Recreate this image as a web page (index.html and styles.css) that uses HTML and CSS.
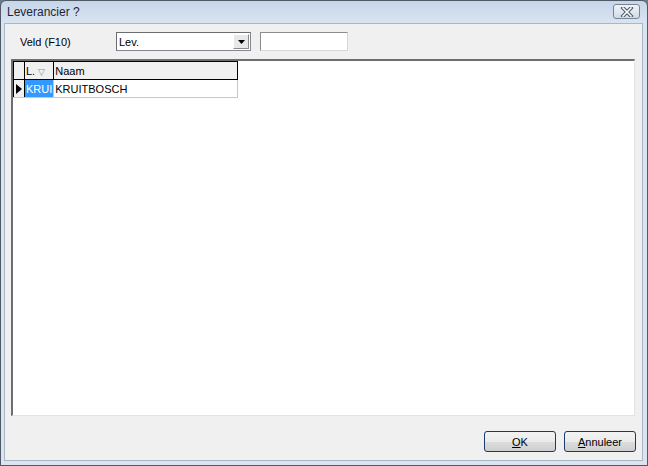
FILE: index.html
```html
<!DOCTYPE html>
<html lang="nl">
<head>
  <meta charset="UTF-8">
  <title>Leverancier ?</title>
  <link rel="stylesheet" href="styles.css">
</head>
<body>
  <div class="venster">
    <div class="titelbalk">
      <span class="titel">Leverancier ?</span>
      <span class="sluiten">
        <svg width="14" height="10" viewBox="0 0 14 10">
          <path d="M3 1 L11 9 M11 1 L3 9" stroke="#4a5568" stroke-width="3.6" stroke-linecap="square"/>
          <path d="M3 1 L11 9 M11 1 L3 9" stroke="#fff" stroke-width="1.6" stroke-linecap="square"/>
        </svg>
      </span>
    </div>
    <div class="inhoud">
      <div class="zoekregel">
        <span class="label">Veld (F10)</span>
        <div class="combo">
          <span class="combo-tekst">Lev.</span>
          <span class="combo-knop">
            <svg width="7" height="4" viewBox="0 0 7 4"><path d="M0 0 H7 L3.5 4 Z" fill="#000"/></svg>
          </span>
        </div>
        <div class="invoer"></div>
      </div>

      <div class="raster">
        <table class="tabel">
          <thead>
            <tr>
              <th class="ind"></th>
              <th class="kol-lev">L. <span class="sorteer">&#9661;</span></th>
              <th class="kol-naam">Naam</th>
            </tr>
          </thead>
          <tbody>
            <tr>
              <td class="ind"><svg width="6" height="10" viewBox="0 0 6 10"><path d="M0 0 L6 5 L0 10 Z" fill="#000"/></svg></td>
              <td class="geselecteerd">KRUI</td>
              <td>KRUITBOSCH</td>
            </tr>
          </tbody>
        </table>
      </div>

      <div class="knoppen">
        <button class="knop"><u>O</u>K</button>
        <button class="knop"><u>A</u>nnuleer</button>
      </div>
    </div>
  </div>
</body>
</html>
```

FILE: styles.css
```css
html, body {
  margin: 0;
  padding: 0;
}
body {
  width: 648px;
  height: 466px;
  overflow: hidden;
  font-family: Tahoma, "Liberation Sans", sans-serif;
  font-size: 11px;
  background-color: #6d7a88;
}
.venster {
  box-sizing: border-box;
  width: 648px;
  height: 466px;
  display: flex;
  flex-direction: column;
  border: 1px solid #4f5a66;
  border-radius: 6px 6px 0 0;
  background: linear-gradient(#c6d6ea, #d9e4f1 22px, #dbe5f1);
  padding: 0 4px 4px 3px;
}
.titelbalk {
  height: 22px;
  display: flex;
  align-items: center;
  justify-content: space-between;
}
.titel {
  font-family: "Segoe UI", "Liberation Sans", sans-serif;
  font-size: 12px;
  color: #1e2633;
  padding-left: 3px;
  margin-top: -1px;
}
.sluiten {
  width: 25px;
  height: 13px;
  margin-right: 3px;
  margin-top: -1px;
  border: 1px solid #7b8494;
  border-radius: 3px;
  background: linear-gradient(#f0f4f9, #d0dae6);
  display: flex;
  align-items: center;
  justify-content: center;
}
.inhoud {
  flex: 1;
  display: flex;
  flex-direction: column;
  background-color: #f0f0f0;
  border: 1px solid #a9b6c4;
  padding: 0 7px 0 6px;
}
.zoekregel {
  display: flex;
  align-items: center;
  height: 35px;
}
.label {
  width: 96px;
  padding-left: 9px;
  color: #000;
}
.combo {
  box-sizing: border-box;
  width: 135px;
  height: 19px;
  display: flex;
  align-items: center;
  border: 1px solid #828790;
  border-top-color: #6d6d6d;
  border-left-color: #6d6d6d;
  background: #fff;
}
.combo-tekst {
  flex: 1;
  padding-left: 2px;
}
.combo-knop {
  box-sizing: border-box;
  width: 16px;
  height: 15px;
  margin-right: 1px;
  background: #e8e8e8;
  border: 1px solid #fff;
  border-right-color: #8a8a8a;
  border-bottom-color: #8a8a8a;
  display: flex;
  align-items: center;
  justify-content: center;
}
.invoer {
  box-sizing: border-box;
  width: 88px;
  height: 19px;
  margin-left: 9px;
  background: #fff;
  border: 1px solid #d6d6d6;
  border-top-color: #8c8c8c;
  border-left-color: #8c8c8c;
}
.raster {
  box-sizing: border-box;
  height: 357px;
  background: #fff;
  border: 1px solid #e3e3e3;
  border-top: 2px solid #6e6e6e;
  border-left: 2px solid #6e6e6e;
}
.tabel {
  border-collapse: collapse;
  table-layout: fixed;
}
.tabel th,
.tabel td {
  height: 17px;
  padding: 0 1px;
  text-align: left;
  font-weight: normal;
  white-space: nowrap;
  overflow: hidden;
  border: 1px solid #000;
}
.tabel th {
  background: #f0f0f0;
}
.tabel td {
  border-color: #c8c8c8;
}
.tabel .ind {
  width: 10px;
  padding: 0;
  background: #f0f0f0;
  border-color: #000;
  text-align: center;
}
.tabel td.ind {
  border-color: #000 #000 #c8c8c8 #000;
}
.tabel td.ind svg {
  display: block;
  margin: 0 auto;
}
.kol-lev {
  width: 26px;
}
.kol-naam {
  width: 181px;
}
.sorteer {
  color: #8a8a8a;
  font-size: 9px;
}
.tabel td.geselecteerd {
  background: #3399ff;
  color: #fff;
}
.knoppen {
  flex: 1;
  display: flex;
  justify-content: flex-end;
  align-items: flex-start;
  gap: 8px;
  padding-top: 15px;
  margin-right: -1px;
}
.knop {
  width: 72px;
  height: 21px;
  font-family: Tahoma, "Liberation Sans", sans-serif;
  font-size: 11px;
  color: #000;
  background: linear-gradient(#f2f2f2, #ebebeb 50%, #dddddd 51%, #cfcfcf);
  border: 1px solid #1a3a6a;
  border-radius: 3px;
  padding: 0;
}
```
